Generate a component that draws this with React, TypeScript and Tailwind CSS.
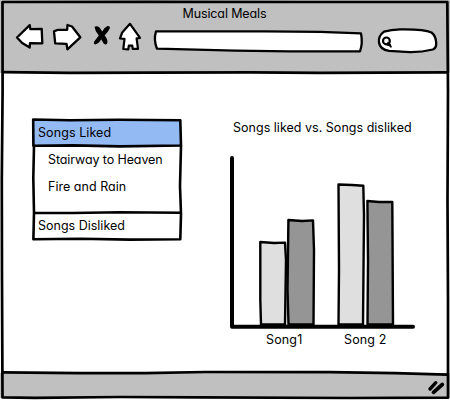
import React from "react";

const stroke = {
  fill: "none",
  stroke: "#000",
  strokeLinecap: "round" as const,
  strokeLinejoin: "round" as const,
};

function BrowserBar() {
  return (
    <header className="h-[73px] shrink-0 bg-[#c0c0c0]">
      <h1 className="h-[21px] pt-[4px] pr-px text-center text-[12.5px] leading-[19px] tracking-[-0.12px]">Musical Meals</h1>
      <div className="flex h-[36px] pl-[14px]">
        <svg className="h-[36px] w-[32px]" viewBox="14 21 32 36" {...stroke} strokeWidth="2.3">
          <path fill="#fff" d="M17 37.5L29.7 25.1L30.4 29.2L41.7 29L42.3 43.3L30 43.2L29.7 47.6L22.2 43Z" />
        </svg>
        <svg className="ml-[5px] h-[36px] w-[32px]" viewBox="51 21 32 36" {...stroke} strokeWidth="2.3">
          <path fill="#fff" d="M54 31.4L58 29.8L67.2 29.8L67.5 25L72 26.5L80.3 37.3L67.4 49.3L66.5 43.8L55.2 43.3Z" />
        </svg>
        <svg className="ml-[7px] h-[36px] w-[24px]" viewBox="90 21 24 36">
          <path d="M94.5 26.8Q97 25.2 99.6 27.5L102.2 31.5Q104 27.5 107.5 26Q110.8 25.8 109.6 28.8Q107.6 32.8 104.6 35.6Q107.8 38.8 107.4 43Q106.5 45.6 103.6 43.4L101.2 39.2Q99 43.6 95.3 44.4Q92.8 44 94.4 41.2L98.8 35.6Q95 31.5 94.5 26.8Z" />
        </svg>
        <svg className="ml-[3px] h-[36px] w-[28px]" viewBox="117 21 28 36" {...stroke} strokeWidth="2.2">
          <path fill="#fff" d="M130 23.8L140 37.8L136.6 38.4L138 48.8L132.7 48.8L132.3 45.7L128.8 45.7L128.3 49.3L123.3 49L124.5 38.8L120 38.5L122.2 32.5Z" />
        </svg>
        <svg className="ml-[6px] h-[36px] w-[215px]" viewBox="151 21 215 36" {...stroke} strokeWidth="2.3">
          <path fill="#fff" d="M156 31.4L265 31.4L320 31.9L361 33.4Q363 43 360 51.3L289 51.3L235 50.6L157 48.7Q153.4 40 156 31.4Z" />
        </svg>
        <svg className="ml-[8px] h-[36px] w-[68px]" viewBox="374 21 68 36" {...stroke} strokeWidth="2.3">
          <path fill="#fff" d="M384 31.6Q391 29.6 400 29.4Q424 29 431.5 32.5Q436 36 436.2 43Q436.5 48 432.8 49.5Q422 52.2 410 52.1L389 50.8Q380 49.5 379 42.5Q378 36 384 31.6Z" />
          <circle cx="386.4" cy="40.9" r="3.4" strokeWidth="2.2" />
          <path strokeWidth="2" d="M388 43L390.8 46.7M388 45L390 44.6" />
        </svg>
      </div>
    </header>
  );
}

function SongAccordion() {
  return (
    <section className="relative mt-[46px] ml-[33px] h-[121px] w-[148px] text-[12.5px] leading-[27px]">
      <h2 className="h-[27px] bg-[#94baf3] pl-[5px] tracking-[0.08px]">Songs Liked</h2>
      <ul className="h-[67px] pl-[15px]">
        <li className="tracking-[-0.1px]">Stairway to Heaven</li>
        <li className="tracking-[0.03px]">Fire and Rain</li>
      </ul>
      <h2 className="h-[27px] pl-[5px] leading-[26px]">Songs Disliked</h2>
      <svg className="absolute inset-0 h-full w-full overflow-visible" viewBox="33 119 148 121" {...stroke} strokeWidth="2.6">
        <path d="M33.2 119.5L70 120.3L118 119.8L180.3 120.3L181 145.5L120 146.4L73 145.4L33.4 145.8Z" />
        <path d="M34 146L33.3 178L34 212.5L33.4 239.3L80 238.7L130 239.6L180.3 239.3L181 214L180 186L181 146M34 212.8L73 213L120 212.2L180.5 212.8" />
      </svg>
    </section>
  );
}

function SongChart() {
  return (
    <section className="mt-[44px] ml-[47px] w-[189px]">
      <h2 className="h-[34px] pl-[5px] text-[12.5px] leading-[21px] whitespace-nowrap tracking-[0.02px]">Songs liked vs. Songs disliked</h2>
      <svg className="block h-[179px] w-[189px] overflow-visible" viewBox="228 151 189 179" {...stroke} strokeWidth="2.4">
        <path fill="#dfdfdf" d="M260.3 242L274 243L285 242.6L286 260L285 324.5L261 324.5L260.3 300Z" />
        <path fill="#959595" d="M288.4 220L302 221L313 220.4L314 250L313.5 324.5L288.5 324.5L287.5 290Z" />
        <path fill="#dfdfdf" d="M338.5 184.5L352 185L363.3 185.8L364 215L363 324.5L338.5 324.5L339 270Z" />
        <path fill="#959595" d="M367.4 201L379 202L392.3 202L392.5 235L393 324.5L367.5 324.5L368 260Z" />
        <path strokeWidth="4" d="M232 158L232 326.8L413 326.8" />
      </svg>
      <div className="flex h-[20px] text-[12.5px] leading-[19px] tracking-[0.15px]">
        <span className="ml-[38px] w-[78px]">Song1</span>
        <span>Song 2</span>
      </div>
    </section>
  );
}

function WindowFrame() {
  return (
    <svg className="pointer-events-none absolute inset-0 h-full w-full" viewBox="0 0 450 400" {...stroke} strokeWidth="2.7">
      <path d="M2.5 2L150 1.8L300 2L447.3 2L448 90L447.5 200L448 300L448 397.7L350 398L200 397.4L120 397L35 397.8L2.5 397.4L2 280L1.8 180L2.6 90Z" />
      <path d="M3 72.2L70 72.8L150 72.7L250 72.4L320 72.8L447 72.4" />
      <path d="M3 372.3L80 373.1L145 373.1L205 372L330 372.1L395 373.2L447 374.6" />
      <path strokeWidth="3.4" d="M435.8 382.7L430 389" />
      <path strokeWidth="3.8" d="M442.3 384.5L433.5 392.3" />
    </svg>
  );
}

export default function App() {
  return (
    <div className="relative flex h-[400px] w-[450px] flex-col overflow-hidden bg-white font-[Inter,sans-serif] text-black [font-feature-settings:'cv11']">
      <BrowserBar />
      <main className="flex h-[300px] shrink-0 items-start">
        <SongAccordion />
        <SongChart />
      </main>
      <footer className="h-[25px] shrink-0 bg-[#c0c0c0]" />
      <WindowFrame />
    </div>
  );
}
